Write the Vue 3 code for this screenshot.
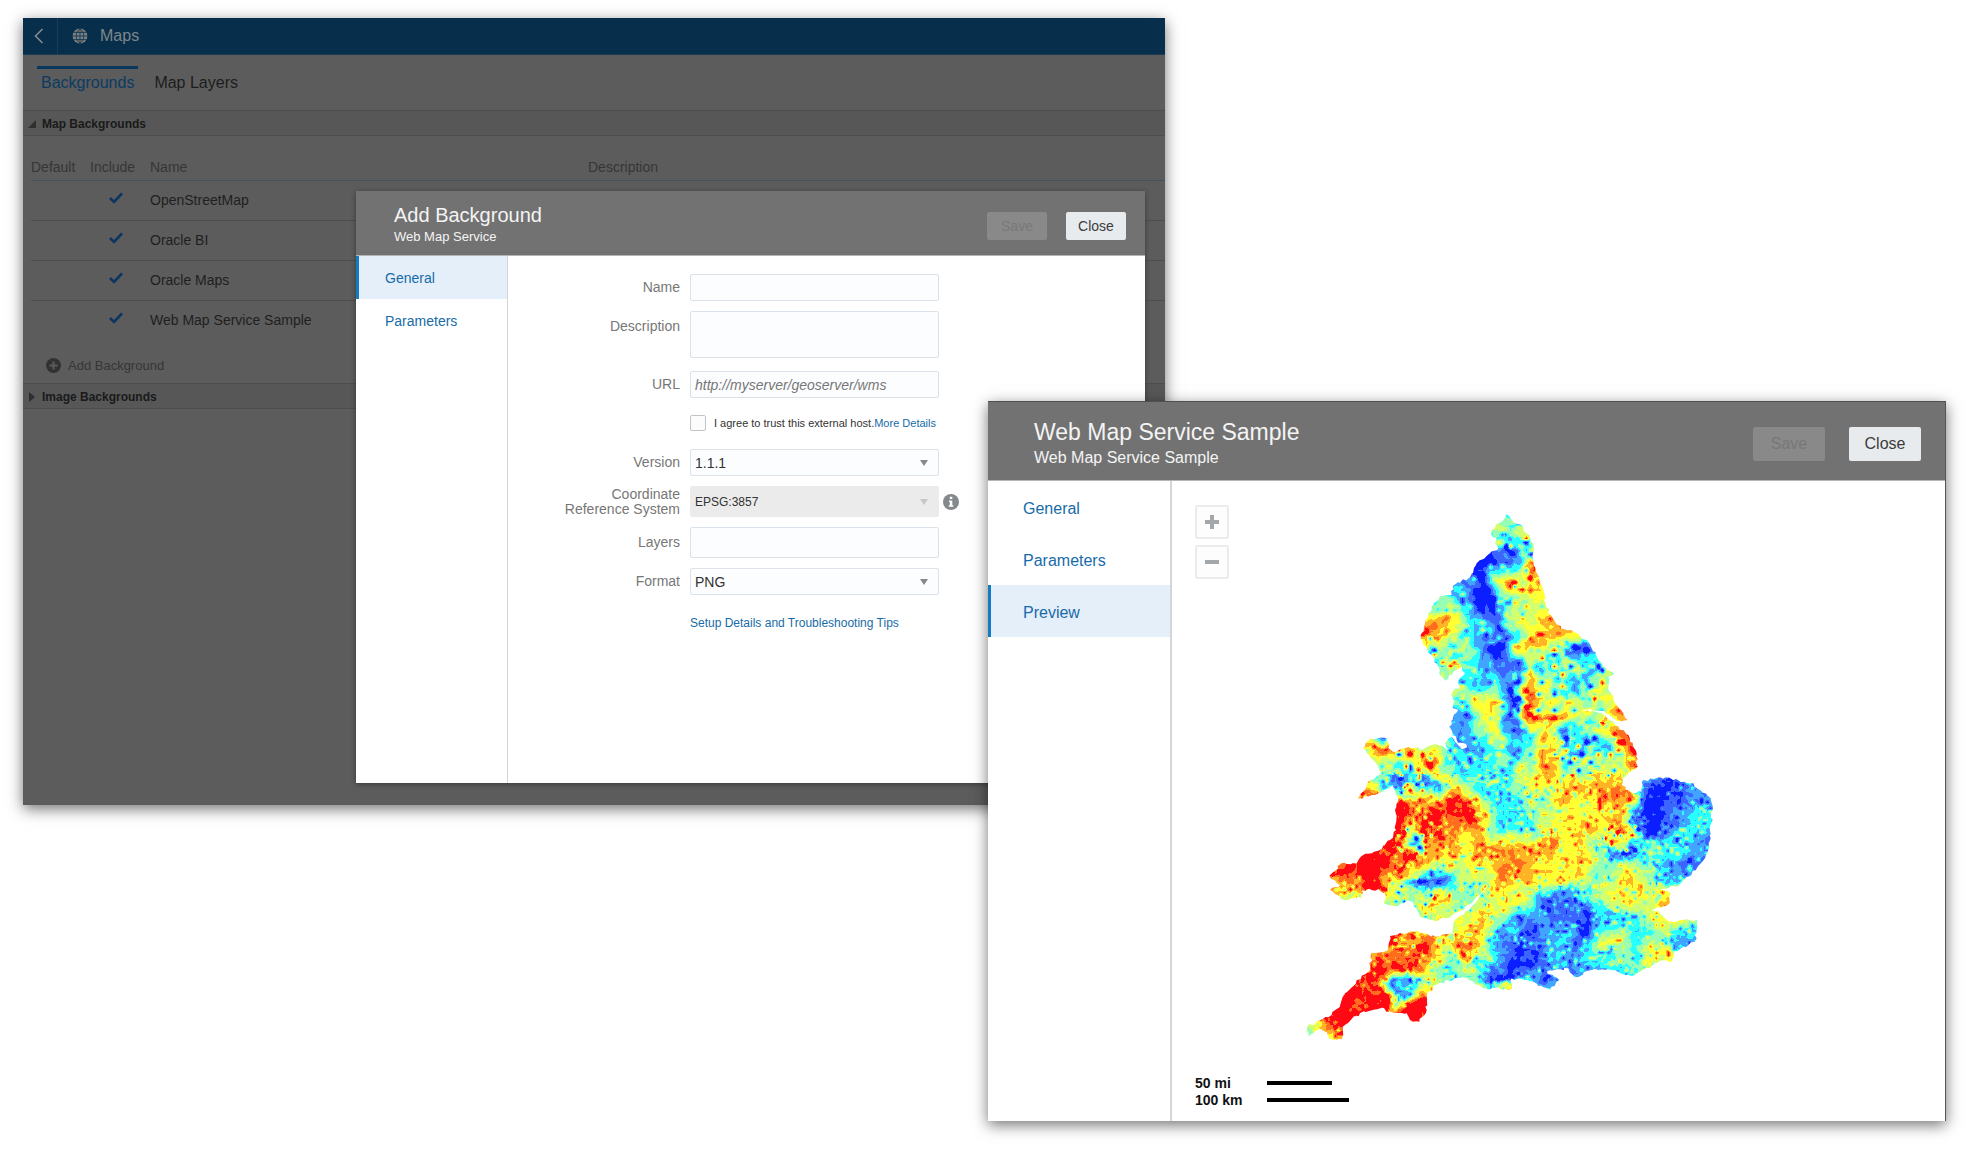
<script setup>
import { ref } from 'vue'

const backgrounds = ['OpenStreetMap', 'Oracle BI', 'Oracle Maps', 'Web Map Service Sample']
const version = ref('1.1.1')
const format = ref('PNG')

/* Map tile: levels sampled on a 50-unit lattice, 0 = low (blue), 9 = high (red). */
const palette = ['#0a1eff', '#3c64ff', '#41a5ff', '#28ffff', '#96ffb4', '#d2ff6e', '#ffff32', '#ffb428', '#ff6e1e', '#ff0a14']
const field = [
  [12, '43'], [12, '43'], [12, '5456'], [12, '1456'], [11, '0237'], [10, '305766'], [9, '3202556'],
  [8, '67301556'], [8, '8743147766'], [8, '43520475113'], [8, '544321334324'], [9, '53241753344'],
  [9, '44651764356'], [9, '225628666468'], [9, '224512723359'], [4, '68676423334724248'],
  [5, '5268433435846358'], [4, '532217433456676662111'], [6, '8749743454766870112'],
  [6, '98989733456666601232'], [6, '94877744366767402332'], [5, '98376677678664324432'],
  [3, '8998966567866764454311'], [2, '7798511254767565456534'], [3, '65544754556312245667'],
  [7, '4455753211132356'], [6, '8576663112303434432'], [5, '7889586311331654563'],
  [5, '88864442012332335'], [3, '9881453421132'], [3, '989199'], [2, '999999'], [1, '468']
]
/* Areas where neighbouring cells vary strongly: x, y, radius x, radius y. */
const rugged = [
  [370, 830, 80, 90], [370, 1010, 60, 110], [470, 470, 70, 60], [850, 560, 120, 110], [400, 1215, 90, 45],
  [780, 640, 120, 50], [340, 1350, 60, 30], [690, 180, 50, 120], [900, 780, 110, 90], [1000, 1050, 60, 60]
]
const coast = [
  650,72, 668,92, 695,105, 700,122, 718,135, 732,175, 728,205, 738,245, 762,310, 768,350, 800,403, 825,418,
  862,430, 900,462, 922,505, 940,530, 972,550, 955,560, 955,600, 975,640, 1012,690, 1000,692, 975,688, 940,662,
  880,658, 880,664, 935,670, 985,710, 1015,735, 1040,790, 1043,830, 1005,860, 995,885, 1025,908, 1055,905,
  1060,870, 1110,862, 1165,870, 1210,880, 1262,925, 1268,960, 1262,1030, 1245,1105, 1195,1160, 1160,1190,
  1110,1200, 1142,1210, 1140,1240, 1085,1262, 1110,1270, 1138,1295, 1222,1290, 1215,1355, 1150,1385, 1145,1415,
  1110,1412, 1025,1458, 955,1438, 895,1442, 855,1462, 835,1435, 770,1445, 808,1470, 780,1500, 730,1475, 665,1465,
  665,1498, 585,1495, 550,1475, 515,1462, 450,1478, 415,1505, 410,1560, 388,1595, 360,1590, 350,1570, 300,1565,
  275,1553, 210,1570, 158,1610, 155,1648, 125,1648, 110,1625, 85,1618, 55,1640, 52,1610, 85,1592, 115,1582,
  150,1550, 165,1510, 240,1440, 245,1388, 295,1380, 300,1338, 370,1325, 440,1340, 490,1332, 490,1300, 550,1245,
  600,1180, 545,1240, 470,1285, 435,1293, 390,1280, 360,1232, 310,1248, 280,1240, 285,1210, 265,1198, 215,1200,
  215,1225, 165,1230, 120,1200, 150,1185, 118,1158, 155,1120, 200,1120, 215,1098, 265,1082, 300,1050, 318,1020,
  315,960, 325,930, 308,885, 255,915, 203,925, 230,885, 275,850, 250,810, 218,775, 240,745, 290,745, 295,775,
  320,785, 355,770, 400,778, 435,762, 475,780, 465,760, 485,740, 515,778, 532,772, 500,750, 478,710, 505,660,
  488,655, 488,605, 510,595, 505,570, 525,550, 515,530, 490,545, 465,572, 450,555, 445,530, 425,495, 392,445,
  405,400, 425,350, 450,318, 485,315, 488,288, 540,262, 560,220, 600,190, 625,175, 605,120, 630,98
]

function hash(x, y) {
  let h = Math.imul(x, 374761393) ^ Math.imul(y, 668265263)
  h = Math.imul(h ^ (h >>> 13), 1274126177)
  return ((h ^ (h >>> 16)) >>> 0) / 4294967296
}
function sample(c, r) {
  const [start, row] = field[Math.min(Math.max(r, 0), field.length - 1)]
  return +row[Math.min(Math.max(c - start, 0), row.length - 1)]
}
function blend(x, y, get) {
  const c = Math.floor(x), r = Math.floor(y), u = x - c, v = y - r
  return (get(c, r) * (1 - u) + get(c + 1, r) * u) * (1 - v) + (get(c, r + 1) * (1 - u) + get(c + 1, r + 1) * u) * v
}
function grain(c, r) {
  const h = hash(c + 500, r + 900)
  if (h > 0.95) return 2.6
  if (h < 0.05) return -2.6
  return (h - 0.5) * 1.8
}

const layers = palette.map(() => '')
const step = 3
function levelAt(x, y) {
  const wx = x + (blend(x / 40, y / 40, hash) - 0.5) * 50
  const wy = y + (blend(x / 40 + 60, y / 40, hash) - 0.5) * 50
  const base = blend((wx - 25) / 50, (wy - 25) / 50, sample)
  const patch = blend(x / 30 + 90, y / 30 + 20, hash) - 0.5
  const cell = y < 850 ? 12 : 9
  const fine = blend(x / cell, y / cell, grain)
  let gain = base < 0.9 || base > 8.2 ? 0.5 : 1
  for (const [cx, cy, rx, ry] of rugged) {
    if (((x - cx) / rx) ** 2 + ((y - cy) / ry) ** 2 < 1) gain = 2
  }
  return Math.min(9, Math.max(0, Math.round((base - 4.5) * 1.1 + 4.5 + gain * (patch * 1.6 + fine))))
}
for (let y = 60; y < 1671; y += step) {
  let start = 36, level = levelAt(36, y)
  for (let x = 36 + step; x <= 1290; x += step) {
    const next = x < 1290 ? levelAt(x, y) : -1
    if (next !== level) {
      layers[level] += `M${start} ${y}H${x}v${step}H${start}z`
      start = x
      level = next
    }
  }
}

const outline = []
for (let i = 0; i < coast.length; i += 2) {
  const j = (i + 2) % coast.length
  const dx = coast[j] - coast[i], dy = coast[j + 1] - coast[i + 1]
  const steps = Math.max(1, Math.round(Math.hypot(dx, dy) / 10))
  for (let s = 0; s < steps; s++) {
    const jx = s ? (hash(i, s) - 0.5) * 9 : 0
    const jy = s ? (hash(s, i + 7) - 0.5) * 9 : 0
    outline.push(`${Math.round(coast[i] + dx * s / steps + jx)},${Math.round(coast[i + 1] + dy * s / steps + jy)}`)
  }
}
const coastline = outline.join(' ')
</script>

<template>
  <div class="desktop">
    <section class="window maps">
      <header class="appbar">
        <button class="back" aria-label="Back">
          <svg width="10" height="16" viewBox="0 0 10 16"><path d="M8.5 1 1.5 8l7 7" fill="none" stroke="#858a8e" stroke-width="1.6" /></svg>
        </button>
        <svg class="globe" width="16" height="16" viewBox="0 0 16 16">
          <circle cx="8" cy="8" r="7.4" fill="#7d8184" />
          <path d="M8 0v16M.6 8h14.8M1.6 4.4h12.8M1.6 11.6h12.8M8 .6C3 4 3 12 8 15.400M8 .6c5 3.400 5 11.400 0 14.800" fill="none" stroke="#072f4b" stroke-width=".8" />
        </svg>
        <h1>Maps</h1>
      </header>
      <nav class="tabs">
        <a href="#" class="tab current">Backgrounds</a>
        <a href="#" class="tab">Map Layers</a>
      </nav>
      <h2 class="bar">
        <svg width="8" height="8" viewBox="0 0 8 8"><path d="M8 0v8H0z" fill="#2f2f2f" /></svg>
        Map Backgrounds
      </h2>
      <table class="list">
        <thead>
          <tr><th class="c-default">Default</th><th class="c-include">Include</th><th class="c-name">Name</th><th>Description</th></tr>
        </thead>
        <tbody>
          <tr v-for="name in backgrounds" :key="name">
            <td></td>
            <td class="tick"><svg width="14" height="12" viewBox="0 0 14 12"><path d="M1 6l4 4L13 1.500" fill="none" stroke="#0a3660" stroke-width="2.600" /></svg></td>
            <td>{{ name }}</td>
            <td></td>
          </tr>
        </tbody>
      </table>
      <button class="add">
        <svg width="15" height="15" viewBox="0 0 15 15"><circle cx="7.500" cy="7.500" r="7.500" fill="#323232" /><path d="M7.500 3.500v8M3.500 7.500h8" stroke="#5c5c5c" stroke-width="2" /></svg>
        Add Background
      </button>
      <h2 class="bar">
        <svg width="8" height="10" viewBox="0 0 8 10"><path d="M1 0l6 5-6 5z" fill="#2f2f2f" /></svg>
        Image Backgrounds
      </h2>

      <section class="dialog">
        <header class="head">
          <div class="titles">
            <h3>Add Background</h3>
            <p>Web Map Service</p>
          </div>
          <button class="btn" disabled>Save</button>
          <button class="btn">Close</button>
        </header>
        <div class="body">
          <nav class="side">
            <a href="#" class="on">General</a>
            <a href="#">Parameters</a>
          </nav>
          <form class="form" @submit.prevent>
            <div class="row"><label for="name">Name</label><input id="name" type="text" class="field" /></div>
            <div class="row top"><label for="desc">Description</label><textarea id="desc" class="field"></textarea></div>
            <div class="row url"><label for="url">URL</label><input id="url" type="text" class="field" placeholder="http://myserver/geoserver/wms" /></div>
            <div class="row trust">
              <input id="trust" type="checkbox" />
              <label for="trust">I agree to trust this external host.</label><a href="#">More Details</a>
            </div>
            <div class="row">
              <label for="version">Version</label>
              <span class="pick"><select id="version" v-model="version" class="field"><option>1.1.1</option></select></span>
            </div>
            <div class="row">
              <label for="crs">Coordinate Reference System</label>
              <span class="pick"><select id="crs" class="field tall" disabled><option>EPSG:3857</option></select></span>
              <svg class="info" width="16" height="16" viewBox="0 0 16 16"><circle cx="8" cy="8" r="8" fill="#85898c" /><path d="M6.800 2.800h2.500v2.200H6.800zM6 6.500h3.300v4.800h1v1.500H5.800v-1.500h1V8H6z" fill="#fff" /></svg>
            </div>
            <div class="row"><label for="layers">Layers</label><input id="layers" type="text" class="field tall" /></div>
            <div class="row">
              <label for="format">Format</label>
              <span class="pick"><select id="format" v-model="format" class="field"><option>PNG</option></select></span>
            </div>
            <a href="#" class="tips">Setup Details and Troubleshooting Tips</a>
          </form>
        </div>
      </section>
    </section>

    <section class="window sample">
      <header class="head">
        <div class="titles">
          <h3>Web Map Service Sample</h3>
          <p>Web Map Service Sample</p>
        </div>
        <button class="btn" disabled>Save</button>
        <button class="btn">Close</button>
      </header>
      <div class="body">
        <nav class="side">
          <a href="#">General</a>
          <a href="#">Parameters</a>
          <a href="#" class="on">Preview</a>
        </nav>
        <div class="preview">
          <div class="stage">
            <div class="zoom">
              <button aria-label="Zoom in"><svg width="14" height="14" viewBox="0 0 14 14"><path d="M7 0v14M0 7h14" stroke="#a3a7aa" stroke-width="4" /></svg></button>
              <button aria-label="Zoom out"><svg width="14" height="14" viewBox="0 0 14 14"><path d="M0 7h14" stroke="#a3a7aa" stroke-width="4" /></svg></button>
            </div>
            <svg class="map" width="450" height="580" viewBox="0 0 1350 1740">
              <clipPath id="land">
                <polygon :points="coastline" />
              </clipPath>
              <g clip-path="url(#land)">
                <path v-for="(d, i) in layers" :key="i" :d="d" :fill="palette[i]" shape-rendering="crispEdges" />
              </g>
            </svg>
          </div>
          <div class="scale"><span>50 mi</span><i class="mi"></i></div>
          <div class="scale"><span>100 km</span><i class="km"></i></div>
        </div>
      </div>
    </section>
  </div>
</template>

<style>
body { background: #fff; }
</style>

<style scoped>
* { box-sizing: border-box; }
.desktop { position: relative; min-height: 100vh; overflow: hidden; font-family: "Liberation Sans", Arial, sans-serif; font-size: 14px; }
h1, h2, h3, p { margin: 0; font-weight: 400; }
a { text-decoration: none; color: #176ba8; }
button { font-family: inherit; padding: 0; border: 0; }
svg { flex: none; display: block; }

.window { position: absolute; box-shadow: 0 4px 14px rgba(0, 0, 0, .55); }
.maps { left: 23px; top: 18px; width: calc(60% - 46px); height: 787px; background: #5c5c5c; color: #1f1f1f; }
.sample { left: calc(50% - 2px); right: 34px; top: 401px; height: 720px; background: #fff; border-top: 1px solid #505050; border-right: 1px solid #555; display: flex; flex-direction: column; }

.appbar { display: flex; align-items: center; height: 37px; background: #072f4b; border-bottom: 1px solid #1b3c55; }
.back { width: 35px; height: 36px; display: flex; align-items: center; padding-left: 11px; background: none; border-right: 1px solid #1d3d57; }
.globe { margin: 0 12px 0 14px; }
.appbar h1 { font-size: 16px; color: #7f8589; }

.tabs { display: flex; gap: 12px; height: 55px; padding: 11px 14px 0; }
.tab { height: 34px; padding: 4px 4px 0; border-top: 3px solid transparent; font-size: 16px; line-height: 20px; color: #1c1c1c; }
.tab.current { color: #0b3b62; border-color: #08385e; }

.bar { display: flex; align-items: center; gap: 6px; height: 26px; padding: 1px 0 0 5px; background: #575757; border: solid #4b4e50; border-width: 1px 0; font-size: 12px; font-weight: 700; color: #1a1a1a; }

.list { width: calc(100% - 8px); margin: 18px 0 0 8px; border-collapse: collapse; table-layout: fixed; }
.list th { height: 26px; padding: 0; text-align: left; font-weight: 400; color: #363636; vertical-align: middle; }
.list td { height: 40px; padding: 0 0 1px; border-top: 1px solid #4d4d4d; }
.list tr:first-child td { border-top: 1px solid #45525a; }
.c-default { width: 59px; }
.c-include { width: 60px; }
.c-name { width: 438px; }
.tick svg { margin: -3px 0 0 19px; }
.add { display: flex; align-items: center; gap: 7px; height: 43px; margin-left: 23px; padding-top: 8px; background: none; font-size: 13px; color: #363636; }

.dialog { position: absolute; left: 333px; right: 20px; top: 173px; height: 592px; background: #fff; box-shadow: 0 1px 5px rgba(0, 0, 0, .4); display: flex; flex-direction: column; }
.head { display: flex; background: #727272; border-bottom: 1px solid #b5b5b5; color: #f4f4f4; }
.titles { flex: 1; }
.btn { background: #e8ebee; color: #3c3c3c; border-radius: 2px; }
.btn:disabled { background: #898989; color: #787878; }
.body { flex: 1; display: flex; }
.side { display: flex; flex-direction: column; border-right: 1px solid #d5d5d5; }
.side a { display: flex; align-items: center; border-left: 3px solid transparent; }
.side .on { background: #e5effa; border-color: #147ac5; }

.dialog .head { height: 65px; padding: 0 19px 0 38px; gap: 19px; }
.dialog .titles { padding-top: 12px; }
.dialog h3 { font-size: 20px; line-height: 24px; }
.dialog p { font-size: 13px; line-height: 20px; }
.dialog .btn { width: 60px; height: 28px; margin-top: 21px; font-size: 14px; }
.dialog .side { width: 152px; }
.dialog .side a { height: 43px; padding: 0 0 0 26px; }

.form { flex: 1; padding-top: 18px; }
.row { display: flex; align-items: center; margin-bottom: 10px; }
.row > label { width: 172px; padding-left: 40px; margin-right: 10px; text-align: right; line-height: 15px; color: #777; }
.row.top { align-items: flex-start; }
.row.top > label { padding-top: 8px; }
.row.url { margin-top: 13px; }
.field { display: block; width: 249px; height: 27px; margin: 0; padding: 0 4px; border: 1px solid #dbe2e9; border-radius: 2px; background: #fcfdfe; color: #333; font-family: inherit; font-size: 14px; appearance: none; resize: none; }
textarea.field { height: 47px; }
.field.tall { height: 31px; }
.field::placeholder { font-style: italic; color: #777; opacity: 1; }
.field:disabled { background: #ebebeb; border-color: #ebebeb; font-size: 12px; opacity: 1; }
.pick { position: relative; }
.pick::after { content: ""; position: absolute; right: 11px; top: 50%; margin-top: -3px; border: solid transparent; border-width: 6px 4px 0; border-top-color: #85898c; pointer-events: none; }
.pick:has(:disabled)::after { border-top-color: #c6c8ca; }
.info { margin-left: 4px; }
.row.trust { margin: 17px 0 18px 182px; font-size: 11px; }
.trust input { width: 16px; height: 16px; margin: 0 8px 0 0; border: 1px solid #c4c4c4; border-radius: 2px; background: #fcfcfc; appearance: none; }
.row.trust > label { width: auto; padding: 0; margin: 0; color: #333; }
.tips { display: block; margin: 20px 0 0 182px; font-size: 12px; line-height: 16px; }

.sample .head { height: 79px; padding: 0 24px 0 46px; gap: 24px; }
.sample .titles { padding-top: 16px; }
.sample h3 { font-size: 23px; line-height: 28px; }
.sample p { font-size: 16px; line-height: 24px; }
.sample .btn { width: 72px; height: 34px; margin-top: 25px; font-size: 16px; }
.sample .side { width: 184px; border-right-width: 2px; font-size: 16px; }
.sample .side a { height: 52px; padding: 3px 0 0 32px; }
.preview { flex: 1; padding: 9px 0 0 23px; }
.stage { display: flex; gap: 61px; height: 584px; }
.zoom { display: flex; flex-direction: column; gap: 6px; padding-top: 15px; }
.zoom button { display: grid; place-items: center; width: 34px; height: 34px; border: 2px solid #ebebeb; border-radius: 3px; background: #fdfdfd; }
.scale { display: flex; align-items: center; height: 17px; font-weight: 700; color: #111; }
.scale span { width: 72px; }
.scale i { height: 4px; background: #000; }
.mi { width: 65px; }
.km { width: 82px; }
</style>
